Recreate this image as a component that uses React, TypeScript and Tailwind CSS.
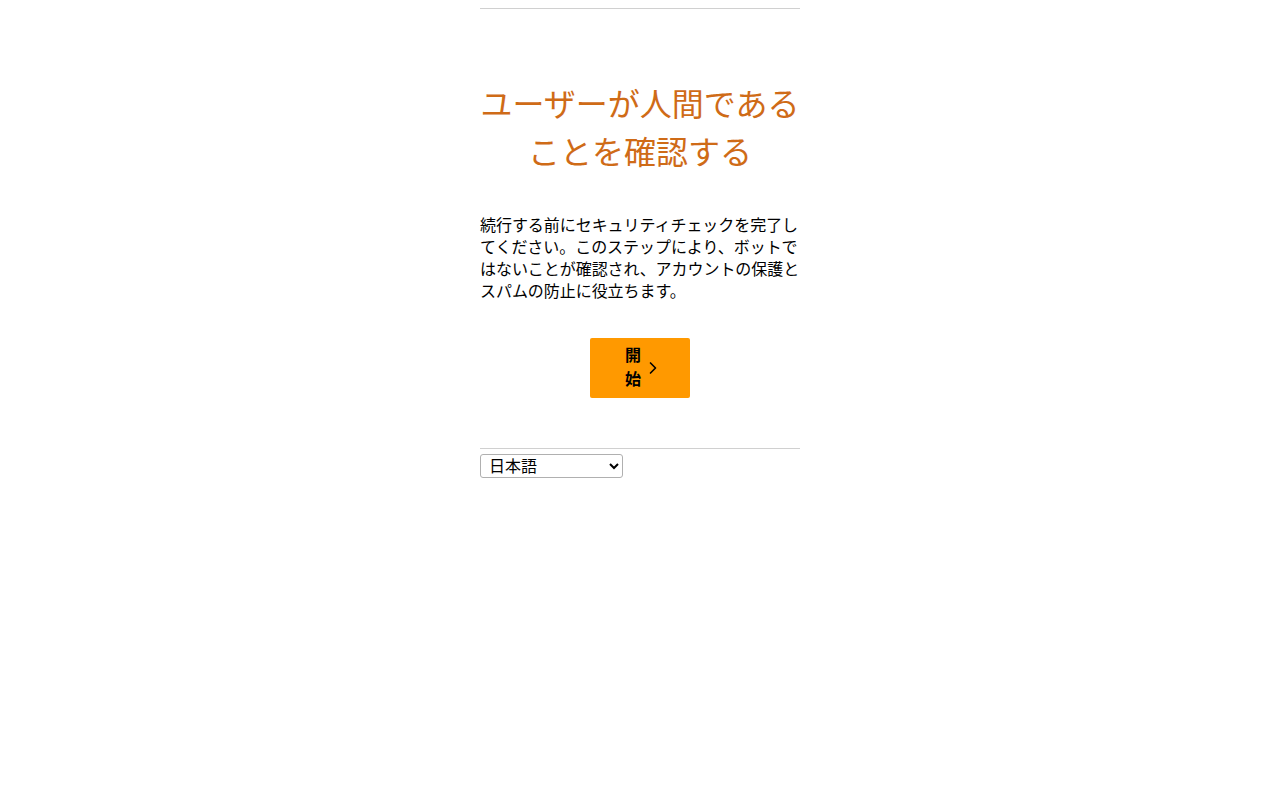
import { ChevronRight } from 'lucide-react';

export default function App() {
  return (
    <div
      className="min-h-screen bg-white text-black"
      style={{ fontFamily: '"Liberation Sans", "Noto Sans CJK JP", sans-serif' }}
    >
      <div className="mx-auto w-[320px] pt-2">
        <hr className="border-t border-[#d0d0d0]" />

        <h1 className="mt-[72px] text-center text-[32px] leading-[48px] font-normal text-[#cf6b17]">
          ユーザーが人間である
          <br />
          ことを確認する
        </h1>

        <p className="mt-[38px] text-base leading-[22px] tracking-[-0.05px]">
          続行する前にセキュリティチェックを完了してください。このステップにより、ボットではないことが確認され、アカウントの保護とスパムの防止に役立ちます。
        </p>

        <div className="mt-[35px] flex justify-center">
          <button className="flex h-[60px] w-[100px] items-center justify-center gap-[2px] rounded-[2px] bg-[#ff9900] pl-2 font-bold text-black">
            <span className="w-4 text-base leading-6">開始</span>
            <ChevronRight className="h-5 w-5" strokeWidth={2} />
          </button>
        </div>

        <hr className="mt-[50px] border-t border-[#d0d0d0]" />

        <select
          defaultValue="ja"
          className="mt-[5px] h-6 w-[143px] rounded-[3px] border border-[#b0b0b0] bg-white px-1 text-base leading-5"
        >
          <option value="ja">日本語</option>
          <option value="en">English</option>
        </select>
      </div>
    </div>
  );
}
